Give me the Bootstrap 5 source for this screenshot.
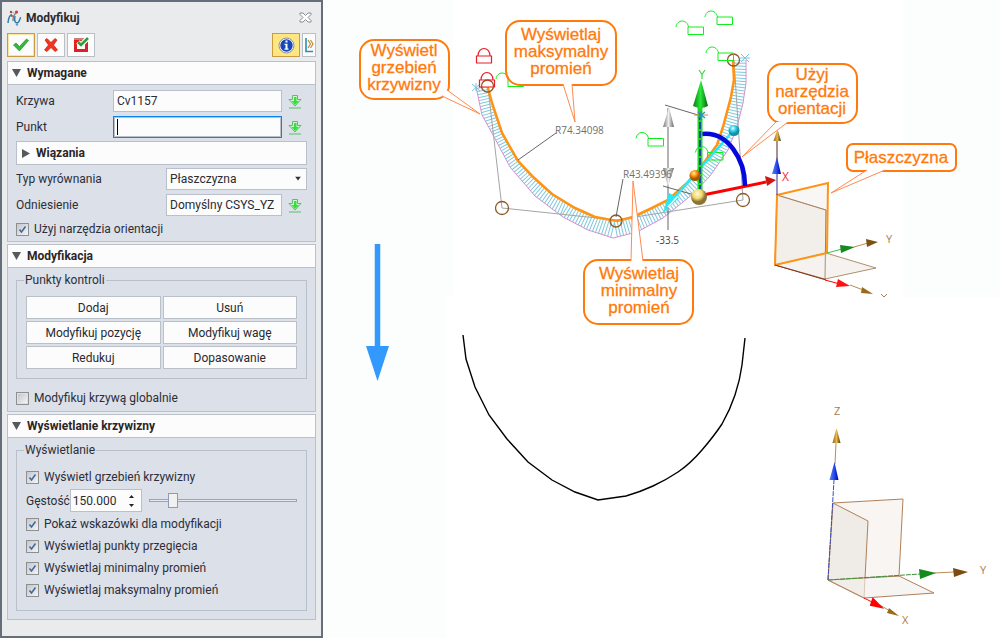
<!DOCTYPE html>
<html lang="pl">
<head>
<meta charset="utf-8">
<meta name="viewport" content="width=device-width, initial-scale=1">
<title>Modyfikuj</title>
<link href="https://cdn.jsdelivr.net/npm/bootstrap@5.3.0/dist/css/bootstrap.min.css" rel="stylesheet">
<style>
body{font:12px/16px Roboto,"Open Sans",sans-serif;color:#2b2b30;background:#fff}
.side{flex:0 0 323px;min-width:0;background:#e9ebec;border:2px solid #666e7b;padding:0 5px}
.side label,.side legend{color:#2d2e38}
.title-row{height:31px}
.ttl{font-size:12px;font-weight:700;line-height:16px;color:#2e2a2c}
.tool{width:28px;height:24px;padding:0;border:1px solid #b9bfc5;background:#fcfcfc;border-radius:0;display:flex;align-items:center;justify-content:center}
.tool.on{border-color:#cb9b41;box-shadow:inset 0 0 0 1px #fbe3a0}
.tool.info{border-color:#cb9b41;background:#ffe680}
.tool.slim{width:14px}
.close-x{border:0;background:none;padding:0;line-height:0}
.sec{border:1px solid #b9c0c9;background:#dbe0e9;margin-bottom:2px}
.head{height:23px;width:100%;border:0;border-bottom:1px solid #b9c0c9;background:#fcfcfc;padding:0 4px;display:flex;align-items:center;gap:6px;font-weight:700;color:#2a2628;text-align:left}
.head.sub{border:1px solid #b9c0c9;height:24px;margin:-1px 0;padding:0 5px}
.frm{display:grid;grid-template-columns:minmax(0,1fr);gap:4px;padding:5px 8px 3px}
.line{display:flex;align-items:center;height:22px}
.line>label:first-child{flex:0 0 97px}
.line.wide>label:first-child{flex-basis:150px}
.fld{border:1px solid #b9c0c9;border-radius:0;background:#fcfcfc;height:22px;padding:0 3px;font-size:12px;line-height:16px;color:#2b2b30;min-width:0;outline:0;box-shadow:none;flex:1 1 0}
.fld.act{border:1px solid #0a84f0;box-shadow:inset 0 0 0 1px #b9c0c9;caret-color:transparent;background:#fcfcfc linear-gradient(#000,#000) 3px 50%/1px 16px no-repeat}
.pick{border:0;background:none;padding:0;width:25px;line-height:0;text-align:center}
.tick{display:flex;align-items:center;gap:5px;height:22px;white-space:nowrap}
.frm .tick{height:18px}
.tick input{appearance:none;width:13px;height:13px;margin:0;border:1px solid #8e8f8f;background:linear-gradient(135deg,#c3c7cf,#f4f4f6) content-box;padding:1px;background-color:#eef0f2;flex:none}
.tick input:checked{background:url("data:image/svg+xml,%3Csvg xmlns='http://www.w3.org/2000/svg' viewBox='0 0 9 9'%3E%3Cpath d='M1.5 4.5 3.5 7 7.5 1.5' fill='none' stroke='%23446a96' stroke-width='1.6'/%3E%3C/svg%3E") center/9px no-repeat,linear-gradient(135deg,#c3c7cf,#f4f4f6)}
.box{border:1px solid #b9c0c9;margin:5px 8px 0;padding:9px}
.box legend{float:none;width:auto;font-size:12px;line-height:14px;margin:0 0 0 -2px;padding:0 1px}
.glob{margin:8px 8px 2px}
.btns{display:grid;grid-template-columns:1fr 1fr;gap:2px}
.btns button{height:23px;border:1px solid #b9c0c9;background:#fcfcfc;padding:0;color:#2a2a30}
.dens{display:flex;align-items:center;margin:1px 0}
.dens label{flex:0 0 43px}
.spin{width:72px;border:1px solid #b9c0c9;background:#fcfcfc;height:23px;display:flex;align-items:center}
.spin input{border:0;background:none;width:54px;padding:0 2px;outline:0;color:#2b2b30}
.spin button{border:0;background:none;padding:0;width:14px;height:10px;line-height:0;display:block}
input[type=range]{appearance:none;background:none;flex:1 1 0;min-width:0;height:16px;margin:0 0 0 7px}
input[type=range]::-webkit-slider-runnable-track{height:3px;border:1px solid #9aa4b2;background:#e6e9ee}
input[type=range]::-webkit-slider-thumb{appearance:none;width:10px;height:15px;border:1px solid #8e9bb3;background:#f0f1f0;margin-top:-7px}
.scene{min-width:0}
.scene svg{width:100%;height:auto}
.note{font:17px "Liberation Sans",sans-serif;fill:#ff7a0a;stroke:#ff7a0a;stroke-width:.3;text-anchor:middle}
.dim{font:10px "Open Sans",sans-serif;fill:#707070}
.ax{font:11px "Open Sans",sans-serif;fill:#a87c50}
</style>
</head>
<body>
<div class="d-flex align-items-stretch min-vh-100">
<aside class="side">
  <div class="title-row d-flex align-items-center gap-1">
    <svg width="15" height="17" viewBox="0 0 15 17" fill="none"><path d="M1 14C1.500 8 3 6 5 5.500" stroke="#2e7fb0" stroke-width="1.500"/><path d="M6 12C6 7 7 5 9.500 4" stroke="#737b84" stroke-width="1.300"/><path d="M8 7C6.500 13 9 14.500 11 13.500S12.500 9 14 8.500" stroke="#2e7fb0" stroke-width="1.500"/><path d="M3 3 9.500 4.500" stroke="#b99" stroke-dasharray="1.500 1"/><circle cx="4" cy="3" r="1.200" fill="#cf3a35"/><circle cx="9.500" cy="3" r="1.600" fill="#cf3a35"/><circle cx="5" cy="7" r="1" fill="#cf3a35"/><circle cx="10" cy="15.500" r="1.200" fill="#5d9fc4"/></svg>
    <span class="ttl me-auto">Modyfikuj</span>
    <button class="close-x me-1" aria-label="Zamknij"><svg width="13" height="11" viewBox="0 0 13 11"><path d="M1 1h3l2.500 2.500L9 1h3v1.500L9 5.500l3 3V10H9L6.500 7.500 4 10H1V8.500l3-3-3-3z" fill="#fff" stroke="#888c92"/></svg></button>
  </div>
  <div class="d-flex mb-1" style="gap:2px">
    <button class="tool on" aria-label="OK"><svg width="18" height="14" viewBox="0 0 18 14"><path d="M1.500 7 4 5l3.500 3.500L14.500 1l2 1.500L7.500 13z" fill="#35b73b" stroke="#1f8f2a" stroke-width=".7"/></svg></button>
    <button class="tool" aria-label="Anuluj"><svg width="16" height="16" viewBox="0 0 16 16"><path d="M2 3 4 1.500 8 5.500 12 1.500 14 3 10.500 8 14.500 13 12 14.500 8 10.500 4 14.500 1.500 13 5.500 8z" fill="#f2331f" stroke="#c22018" stroke-width=".7"/></svg></button>
    <button class="tool" aria-label="Zastosuj"><svg width="17" height="16" viewBox="0 0 17 16"><path d="M2.500 3.500h11v10h-11z" fill="#fff" stroke="#df2026" stroke-width="3"/><path d="M1 2h13" stroke="#c98172" stroke-width="2"/><path d="M5 5l3 3 7-7" fill="none" stroke="#fff" stroke-width="5"/><path d="M5 5l3 3 7-7" fill="none" stroke="#2f9f3a" stroke-width="2.600"/></svg></button>
    <button class="tool info ms-auto" aria-label="Informacja"><svg width="17" height="17" viewBox="0 0 17 17"><circle cx="8.500" cy="8.500" r="7.500" fill="#fff" stroke="#7f8ca6"/><circle cx="8.500" cy="8.500" r="6.200" fill="#1747b8"/><path d="M7.500 3.500h2v2h-2zM6.500 6.800h3v4.700h1v1.200h-4v-1.200h1V8h-1z" fill="#fff"/></svg></button>
    <button class="tool slim" aria-label="Rozwiń"><svg width="9" height="16" viewBox="0 0 9 16" fill="none"><path d="M1 1v13.500h7" stroke="#2690b8" stroke-width="1.600"/><path d="m3 3 2.500 4L3 11M5.500 3 8 7l-2.500 4" stroke="#c98c3c" stroke-width="1.300"/></svg></button>
  </div>

  <section class="sec">
    <button class="head"><svg width="9" height="8"><path d="M0 0h9L4.500 8z" fill="#55585c"/></svg>Wymagane</button>
    <div class="frm">
      <div class="line"><label for="krz">Krzywa</label><input id="krz" class="fld" value="Cv1157"><button class="pick" aria-label="Wybierz krzywą"><svg width="14" height="15"><use href="#dl"/></svg></button></div>
      <div class="line"><label for="pkt">Punkt</label><input id="pkt" class="fld act"><button class="pick" aria-label="Wybierz punkt"><svg width="14" height="15"><use href="#dl"/></svg></button></div>
      <button class="head sub"><svg width="8" height="9"><path d="M0 0v9L8 4.500z" fill="#55585c"/></svg>Wiązania</button>
      <div class="line wide"><label for="typ">Typ wyrównania</label><div class="position-relative d-flex flex-fill"><select id="typ" class="fld" style="appearance:none"><option>Płaszczyzna</option></select><svg class="position-absolute top-50 end-0 translate-middle-y me-1 pe-none" width="9" height="5"><path d="M1 0h6L4 4z" fill="#333"/></svg></div></div>
      <div class="line wide"><label for="odn">Odniesienie</label><input id="odn" class="fld" value="Domyślny CSYS_YZ"><button class="pick" aria-label="Wybierz odniesienie"><svg width="14" height="15"><use href="#dl"/></svg></button></div>
      <label class="tick"><input type="checkbox" checked>Użyj narzędzia orientacji</label>
    </div>
  </section>

  <section class="sec">
    <button class="head"><svg width="9" height="8"><path d="M0 0h9L4.500 8z" fill="#55585c"/></svg>Modyfikacja</button>
    <fieldset class="box"><legend>Punkty kontroli</legend>
      <div class="btns"><button>Dodaj</button><button>Usuń</button><button>Modyfikuj pozycję</button><button>Modyfikuj wagę</button><button>Redukuj</button><button>Dopasowanie</button></div>
    </fieldset>
    <label class="tick glob"><input type="checkbox">Modyfikuj krzywą globalnie</label>
  </section>

  <section class="sec">
    <button class="head"><svg width="9" height="8"><path d="M0 0h9L4.500 8z" fill="#55585c"/></svg>Wyświetlanie krzywizny</button>
    <fieldset class="box mb-2"><legend>Wyświetlanie</legend>
      <label class="tick"><input type="checkbox" checked>Wyświetl grzebień krzywizny</label>
      <div class="dens"><label for="gest">Gęstość</label><div class="spin"><input id="gest" value="150.000"><div><button aria-label="Więcej"><svg width="7" height="4"><path d="M1 4h5L3.500 1z" fill="#222"/></svg></button><button aria-label="Mniej"><svg width="7" height="4"><path d="M1 0h5L3.500 3z" fill="#222"/></svg></button></div></div><input type="range" aria-label="Gęstość" value="13"></div>
      <label class="tick"><input type="checkbox" checked>Pokaż wskazówki dla modyfikacji</label>
      <label class="tick"><input type="checkbox" checked>Wyświetlaj punkty przegięcia</label>
      <label class="tick"><input type="checkbox" checked>Wyświetlaj minimalny promień</label>
      <label class="tick"><input type="checkbox" checked>Wyświetlaj maksymalny promień</label>
    </fieldset>
  </section>
</aside>

<main class="scene flex-fill">
<svg class="d-block" viewBox="323 0 677 638" fill="none">
  <defs>
    <g id="dl"><path d="M4.500 1.500h5v4h3.500L7 12 1 5.500h3.500z" fill="#d5f7d0" stroke="#5bbd6c"/><path d="M6 3h2.500v4H11L7 11 3.500 7H6z" fill="#33e03c"/><path d="M1 14h12" stroke="#5bbd6c"/></g>
    <g id="open"><path d="M0 6.500C1-1.500 11-1.500 12.500 6.500M12 6.500h15.500V14H12z" stroke="#0fee1c"/></g>
    <g id="shut"><path d="M.5 8h15v7H.5zM2 8C2-2 14-2 14 8" stroke="#ec1c24" stroke-width="1.200"/></g>
    <clipPath id="band"><path d="M487.700 87 492 103 502 133 518 161 552 194 575 208 595 217 617 221 633 217 668 200 687 183 700 168 717 145 723 127 731 97 734 80 733 60H746V83L743 103 737 127 728 150 710 176 693 194 663 218 637 232 613 238 588 230 563 217 535 196 510 167 493 135 482 115 476 87z"/></clipPath>
    <radialGradient id="gold" cx=".4" cy=".3"><stop stop-color="#fffbd8"/><stop offset=".6" stop-color="#f3d76b"/><stop offset="1" stop-color="#8a7436"/></radialGradient>
    <radialGradient id="ora" cx=".4" cy=".3"><stop stop-color="#ffe9a8"/><stop offset=".5" stop-color="#ff9a10"/><stop offset="1" stop-color="#a85800"/></radialGradient>
    <radialGradient id="cy" cx=".4" cy=".3"><stop stop-color="#e8ffff"/><stop offset=".5" stop-color="#37d5ee"/><stop offset="1" stop-color="#1590a8"/></radialGradient>
    <linearGradient id="grn"><stop stop-color="#0a7a14"/><stop offset=".5" stop-color="#2ae838"/><stop offset="1" stop-color="#086010"/></linearGradient>
    <linearGradient id="gry"><stop stop-color="#777"/><stop offset=".5" stop-color="#eee"/><stop offset="1" stop-color="#666"/></linearGradient>
    <linearGradient id="blu"><stop stop-color="#5a86ee"/><stop offset=".5" stop-color="#2a4cf0"/><stop offset="1" stop-color="#0000a0"/></linearGradient>
    <linearGradient id="brs"><stop stop-color="#8a6018"/><stop offset=".5" stop-color="#e8b84c"/><stop offset="1" stop-color="#4c340a"/></linearGradient>
  </defs>
  <path d="M323 0h130v297h-7v341H323zM903 0h97v297h-97z" fill="#fcfefd"/>

  <!-- curvature comb -->
  <g clip-path="url(#band)"><path d="M482 87Q490 135 515 166T565 207Q590 223 615 229Q650 222 678 200T719 153Q740 110 740 60" stroke="#7fc8dc" stroke-width="26" stroke-dasharray="1 2"/></g>
  <path d="M476 87 482 115 493 135 510 167 535 196 563 217 588 230 613 238 637 232 663 218 693 194 710 176 728 150 737 127 743 103 746 83V60" stroke="#d68fd0"/>
  <path d="M488 88 502 208 616 220 743 200 734 60" stroke="#a5a5a5"/>
  <path d="M487.700 87 492 103 502 133 518 161 532 176 552 194 575 208 595 217 617 221 633 217 652 208 668 200 687 183 700 168 717 145 723 127 731 97 734 80 733 60" stroke="#ff9414" stroke-width="2.600"/>
  <path d="m472 84 8 7m0-7-8 7m4-8v8M741 54l8 8m0-8-8 8m-1-4h10" stroke="#78c7de"/>
  <g stroke="#8b5a26" stroke-width="1.300"><circle cx="487.500" cy="86" r="6"/><circle cx="502" cy="208" r="6.500"/><circle cx="616" cy="221" r="6"/><circle cx="743" cy="200" r="6.500"/><circle cx="733.500" cy="60" r="6"/></g>
  <path d="M518 160 556 133M616 217 623 179M665 105 698 115M663 186 698 196M668 108V230" stroke="#555" stroke-width=".9"/>
  <use href="#shut" x="476" y="48"/><use href="#shut" x="479" y="72"/>
  <use href="#open" x="496" y="72.500"/><use href="#open" x="676" y="20.500"/><use href="#open" x="705" y="10.500"/><use href="#open" x="706" y="46.500"/><use href="#open" x="636" y="132"/><use href="#open" x="695.500" y="146"/>
  <path d="m669 107-6 20h11z" fill="url(#gry)"/><path d="m668 187-5-19h11z" fill="url(#gry)"/>
  <text class="dim" x="555" y="134">R74.34098</text>
  <text class="dim" x="623" y="178">R43.49396</text>
  <text class="dim" x="656" y="244" style="fill:#444">-33.5</text>

  <!-- manipulator -->
  <path d="M698 196 766 182" stroke="#f00" stroke-width="3"/><path d="m765 176 11 4-9 6z" fill="#d11414"/>
  <text x="782" y="181" style="font:12px 'Open Sans',sans-serif" fill="#f03030">X</text>
  <path d="M733 131 667 206" stroke="#28e8f4" stroke-width="2.600"/><path d="m663 213 6-20 10 5z" fill="#28e8f4"/>
  <path d="M668 207 677 197" stroke="#fff" stroke-width="1.500"/>
  <path d="M702 134C728 131 745 160 745 186" stroke="#0507dc" stroke-width="4.600"/>
  <path d="M700 192V104" stroke="#22d52e" stroke-width="5"/><path d="M700 192V114" stroke="#1616c8" stroke-width="1.400" stroke-dasharray="7 2"/>
  <path d="m701 80-8 26q8 4 15 0z" fill="url(#grn)"/>
  <path d="M694 115h14" stroke="#e38a2c"/><path d="m698 112 7 6m0-6-7 6m3-7v9" stroke="#2696b8" stroke-width="1.500"/>
  <path d="m699 70 3 4.500 3-4.500M702 74v5" stroke="#38d840" stroke-width="1.200"/>
  <circle cx="734" cy="130.500" r="5.500" fill="url(#cy)"/><circle cx="695" cy="175.500" r="5.500" fill="url(#ora)"/><circle cx="699" cy="197" r="8" fill="url(#gold)"/>

  <!-- upper coordinate system -->
  <path d="M777 195 826 210 825 279 775 265z" fill="#f1ede8" stroke="#9c744a"/><path d="M777 195 828 183 827 253 775 265z" fill="#f4efeb80"/>
  <path d="M775 265 826 253 876 268 825 279z" fill="#f6f2ef" stroke="#9c744a" stroke-width=".8"/><path d="M777 195 826 210 825 279" stroke="#9c744a" stroke-width=".8"/>
  <path d="M777 195 828 183 827 253 775 265z" stroke="#ff9414" stroke-width="2"/>
  <path d="M777 195V140" stroke="#3a2a90"/><path d="M777 160V138" stroke="#b98c58"/>
  <path d="m777 157-5 17h9z" fill="url(#blu)"/><path d="m777.500 129-4 12h7.500z" fill="url(#brs)"/>
  <path d="M827 253 842 249" stroke="#3fbf4a"/><path d="M854 247 868 243M850 285 866 291" stroke="#b98c58"/><path d="M775 265 826 280" stroke="#8a3018"/><path d="M825 280 840 284" stroke="#f00"/>
  <path d="m840 245 15 2-14 6z" fill="#168a1e"/><path d="m866 239 12 3-11 5z" fill="#7c5212"/>
  <path d="m838 279 12 7-14 1z" fill="#f11"/><path d="m862 287 11 7-12-1z" fill="#9a6a18"/>
  <text class="ax" x="886" y="243">Y</text><path d="m881 294 3 3 3-3" stroke="#a87c50"/>

  <!-- callouts -->
  <g fill="#fff" stroke="#ff7a0a" stroke-width="2">
    <rect x="360" y="40" width="89" height="59" rx="14"/>
    <rect x="506" y="21" width="110" height="64" rx="14"/>
    <rect x="584" y="260" width="109" height="64" rx="14"/>
    <rect x="768" y="64" width="89" height="59" rx="14"/>
    <rect x="847" y="144" width="109" height="27" rx="6"/>
  </g>
  <g fill="#fff" stroke="#ff8a50" stroke-width="1">
    <path d="M442 96 480 114 447 90"/><path d="M563 84 575 122 572 84"/><path d="M631 261 633 181 643 261"/><path d="M776 122 742 157 788 122"/><path d="M867 170 831 193 885 170"/>
  </g>
  <g class="note">
    <text x="404" y="56">Wyświetl</text><text x="404" y="73">grzebień</text><text x="404" y="90">krzywizny</text>
    <text x="561" y="40">Wyświetlaj</text><text x="561" y="57">maksymalny</text><text x="561" y="74">promień</text>
    <text x="639" y="279">Wyświetlaj</text><text x="639" y="296">minimalny</text><text x="639" y="313">promień</text>
    <text x="812" y="80">Użyj</text><text x="812" y="97">narzędzia</text><text x="812" y="114">orientacji</text>
    <text x="901" y="163">Płaszczyzna</text>
  </g>

  <!-- transition to the resulting curve -->
  <path d="M377.500 244V350" stroke="#3399ff" stroke-width="5.500"/><path d="M366 346h23L377.500 381z" fill="#3399ff"/>
  <path d="M463 335 466 359 475 387 489 415 507 439 528 462 552 480 575 492 598 500 626 496Q640 492 653 486T678 472 702 450 722 424Q730 410 735 395T742 365L745 338" stroke="#000" stroke-width="1.400"/>

  <!-- lower coordinate system -->
  <path d="M833 503 903 499 899 576 828 580z" fill="#f9f5f2" stroke="#b08058"/><path d="M833 503 868 521 864 598 828 580z" fill="#efebe6" stroke="#b08058"/>
  <path d="M828 580 899 576 934 593 864 598z" fill="#f2efeca0" stroke="#b08058"/>
  <path d="M828 580 834 480" stroke="#3450c8" stroke-dasharray="5 1"/><path d="M835 464 836 443M934 573 954 572M880 605 890 611" stroke="#b98c58"/><path d="M828 580 920 574" stroke="#3f8f3a" stroke-dasharray="5 1"/><path d="M864 598 872 602" stroke="#f00"/>
  <path d="m834.500 462-5 18h9z" fill="url(#blu)"/><path d="m836.500 428-4 15h8z" fill="url(#brs)"/>
  <path d="m919 569 17 4-16 6z" fill="#168a1e"/><path d="m953 568 15 4-14 5z" fill="#7c4a12"/><path d="m873 599 8 8-10-2z" fill="#f00" stroke="#f00" stroke-width="2"/><path d="m889 608 10 8-12-3z" fill="#9a6a18"/>
  <text class="ax" x="834" y="415">Z</text><text class="ax" x="980" y="574">Y</text><text class="ax" x="902" y="624">X</text>
</svg>
</main>
</div>
<script src="https://cdn.jsdelivr.net/npm/bootstrap@5.3.0/dist/js/bootstrap.bundle.min.js"></script>
</body>
</html>
